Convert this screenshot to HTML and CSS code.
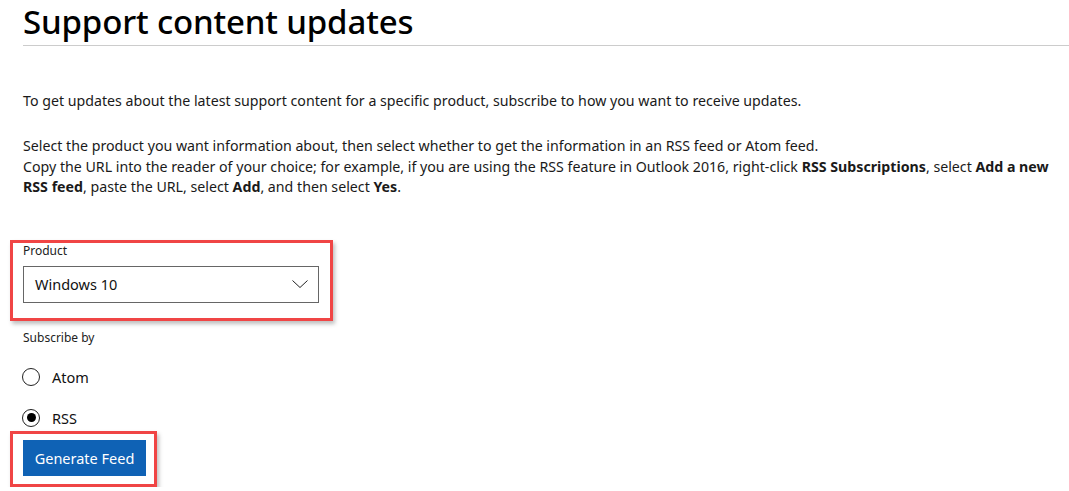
FILE: index.html
```html
<!DOCTYPE html>
<html>
<head>
<meta charset="utf-8">
<link rel="stylesheet" href="styles.css">
</head>
<body>
<div class="page">
  <h1 class="title">Support content updates</h1>
  <p class="intro">To get updates about the latest support content for a specific product, subscribe to how you want to receive updates.</p>
  <p class="steps">Select the product you want information about, then select whether to get the information in an RSS feed or Atom feed.<br>Copy the URL into the reader of your choice; for example, if you are using the RSS feature in Outlook 2016, right-click <b>RSS Subscriptions</b>, select <b>Add a new RSS feed</b>, paste the URL, select <b>Add</b>, and then select <b>Yes</b>.</p>

  <div class="mark mark-product">
    <div class="field-label">Product</div>
    <div class="select">
      <span class="select-value">Windows 10</span>
      <svg class="chevron" width="16" height="8" viewBox="0 0 16 8"><path d="M0.5 0.5 L8 7.5 L15.5 0.5" fill="none" stroke="#222" stroke-width="1"/></svg>
    </div>
  </div>

  <div class="field-label sub-label">Subscribe by</div>
  <div class="radios">
    <label class="radio"><span class="circle"></span><span class="radio-text">Atom</span></label>
    <label class="radio"><span class="circle checked"></span><span class="radio-text">RSS</span></label>
  </div>

  <div class="mark mark-button">
    <button class="btn">Generate Feed</button>
  </div>
</div>
</body>
</html>
```

FILE: styles.css
```css
html, body {
  margin: 0;
  padding: 0;
  background: #fff;
}
body {
  font-family: "Noto Sans", "Open Sans", sans-serif;
  color: #1a1a1a;
  overflow: hidden;
}
.page {
  padding-left: 23px;
}
.title {
  margin: 0;
  height: 46px;
  box-sizing: border-box;
  border-bottom: 1px solid #cccccc;
  font-size: 33px;
  font-weight: 500;
  line-height: 44px;
  color: #000;
  letter-spacing: -0.15px;
}
.intro {
  margin: 45px 0 0;
  font-size: 14.2px;
  line-height: 20px;
}
.steps {
  margin: 25px 0 0;
  font-size: 14.2px;
  line-height: 20.5px;
}
.steps b {
  font-weight: 700;
}
.mark {
  border: 3px solid #f04545;
  box-shadow: 2px 3px 4px rgba(0,0,0,0.25);
  margin-left: -13px;
  padding-left: 10px;
  box-sizing: border-box;
}
.mark-product {
  margin-top: 42px;
  width: 323px;
  height: 81px;
}
.field-label {
  font-size: 12px;
  line-height: 16px;
  color: #222;
}
.select {
  margin-top: 7px;
  width: 296px;
  height: 37px;
  box-sizing: border-box;
  border: 1px solid #666;
  display: flex;
  align-items: center;
  justify-content: space-between;
  padding: 0 10px 0 11px;
}
.select-value {
  font-size: 14.5px;
  color: #111;
}
.chevron {
  display: block;
}
.sub-label {
  margin-top: 9px;
}
.radios {
  display: flex;
  flex-direction: column;
  gap: 21px;
  margin-top: 21px;
}
.radio {
  display: flex;
  align-items: center;
  gap: 12px;
  height: 20px;
}
.circle {
  width: 18px;
  height: 18px;
  box-sizing: border-box;
  border: 1.5px solid #222;
  border-radius: 50%;
  display: flex;
  align-items: center;
  justify-content: center;
  margin-left: -1px;
}
.circle.checked::after {
  content: "";
  width: 9px;
  height: 9px;
  border-radius: 50%;
  background: #000;
}
.radio-text {
  font-size: 14.5px;
  color: #111;
}
.mark-button {
  margin-top: 3px;
  width: 147px;
  height: 56px;
  padding-top: 6px;
}
.btn {
  display: block;
  width: 123px;
  height: 36px;
  border: 0;
  background: #0f62b5;
  color: #fff;
  font-family: inherit;
  font-size: 14.5px;
  padding: 0;
  cursor: pointer;
}
```
